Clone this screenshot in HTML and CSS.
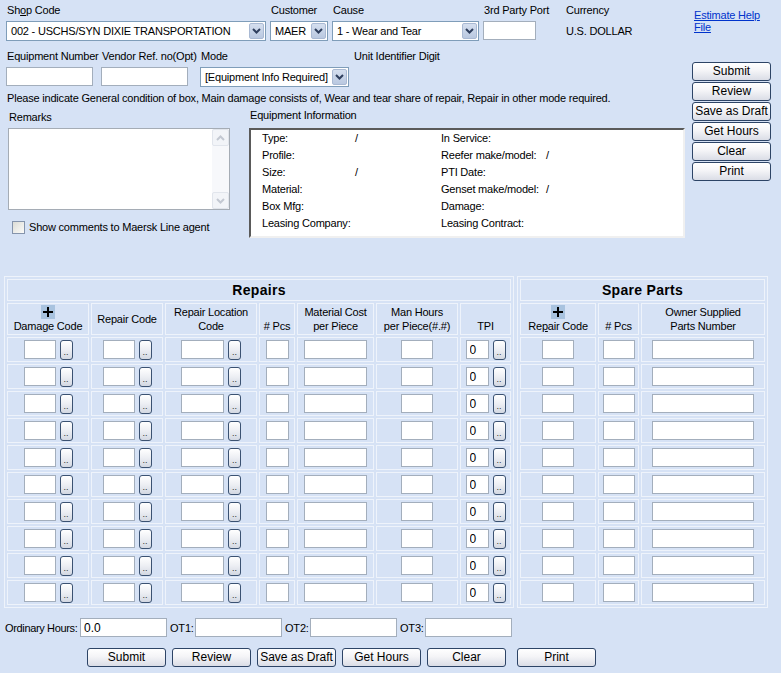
FILE: index.html
```html
<!DOCTYPE html>
<html>
<head>
<meta charset="utf-8">
<link rel="stylesheet" href="styles.css">
</head>
<body>
<div class="page">
  <div class="top">
    <div class="main">
      <div class="row r1">
        <div class="field w-shop">
          <label class="lbl">Sh<u>o</u>p Code</label>
          <div class="select"><span class="sel-text">002 - USCHS/SYN DIXIE TRANSPORTATION</span><span class="sel-arrow"><svg width="9" height="6" viewBox="0 0 9 6"><path d="M1 1L4.5 4.5L8 1" stroke="#2f3f5e" stroke-width="2" fill="none"/></svg></span></div>
        </div>
        <div class="field w-cust">
          <label class="lbl">Customer</label>
          <div class="select"><span class="sel-text">MAER</span><span class="sel-arrow"><svg width="9" height="6" viewBox="0 0 9 6"><path d="M1 1L4.5 4.5L8 1" stroke="#2f3f5e" stroke-width="2" fill="none"/></svg></span></div>
        </div>
        <div class="field w-cause">
          <label class="lbl">Cause</label>
          <div class="select"><span class="sel-text">1 - Wear and Tear</span><span class="sel-arrow"><svg width="9" height="6" viewBox="0 0 9 6"><path d="M1 1L4.5 4.5L8 1" stroke="#2f3f5e" stroke-width="2" fill="none"/></svg></span></div>
        </div>
        <div class="field w-port">
          <label class="lbl">3rd Party Port</label>
          <input class="inp full" type="text">
        </div>
        <div class="field w-cur">
          <label class="lbl">Currency</label>
          <div class="cur-val">U.S. DOLLAR</div>
        </div>
      </div>

      <div class="row r2">
        <div class="field w-eq">
          <label class="lbl">Equipment Number</label>
          <input class="inp full" type="text">
        </div>
        <div class="field w-vendor">
          <label class="lbl">Vendor Ref. no(Opt)</label>
          <input class="inp full" type="text">
        </div>
        <div class="field w-mode">
          <label class="lbl">Mode</label>
          <div class="select"><span class="sel-text">[Equipment Info Required]</span><span class="sel-arrow"><svg width="9" height="6" viewBox="0 0 9 6"><path d="M1 1L4.5 4.5L8 1" stroke="#2f3f5e" stroke-width="2" fill="none"/></svg></span></div>
        </div>
        <div class="field">
          <label class="lbl">Unit Identifier Digit</label>
        </div>
      </div>

      <p class="note">Please indicate General condition of box, Main damage consists of, Wear and tear share of repair, Repair in other mode required.</p>

      <div class="row r4">
        <div class="remarks">
          <label class="lbl lbl-rem">Remarks</label>
          <div class="ta-box">
            <textarea class="ta"></textarea>
            <div class="sb">
              <span class="sb-btn"><svg width="9" height="6" viewBox="0 0 9 6"><path d="M1 5L4.5 1.5L8 5" stroke="#c3c8d2" stroke-width="2" fill="none"/></svg></span>
              <span class="sb-track"></span>
              <span class="sb-btn"><svg width="9" height="6" viewBox="0 0 9 6"><path d="M1 1L4.5 4.5L8 1" stroke="#c3c8d2" stroke-width="2" fill="none"/></svg></span>
            </div>
          </div>
          <div class="chk-row"><span class="chk"></span><span>Show comments to Maersk Line agent</span></div>
        </div>
        <div class="equip">
          <label class="lbl lbl-eq">Equipment Information</label>
          <div class="eq-box">
            <div class="eq-grid">
              <span>Type:</span><span>/</span><span>In Service:</span><span></span>
              <span>Profile:</span><span></span><span>Reefer make/model:</span><span>/</span>
              <span>Size:</span><span>/</span><span>PTI Date:</span><span></span>
              <span>Material:</span><span></span><span>Genset make/model:</span><span>/</span>
              <span>Box Mfg:</span><span></span><span>Damage:</span><span></span>
              <span>Leasing Company:</span><span></span><span>Leasing Contract:</span><span></span>
            </div>
          </div>
        </div>
      </div>
    </div>

    <div class="side">
      <a class="help" href="#">Estimate Help<br>File</a>
      <div class="side-btns">
        <button class="btn">Submit</button>
        <button class="btn">Review</button>
        <button class="btn">Save as Draft</button>
        <button class="btn">Get Hours</button>
        <button class="btn">Clear</button>
        <button class="btn">Print</button>
      </div>
    </div>
  </div>

  <div class="tables">
    <table class="grid repairs">
      <colgroup><col class="c82"><col class="c72"><col class="c92"><col class="c36"><col class="c77"><col class="c82"><col class="c51"></colgroup>
      <tr><th class="title" colspan="7">Repairs</th></tr>
      <tr class="head">
        <th><span class="plus"><svg width="14" height="14" viewBox="0 0 14 14"><path d="M7 2V12M2 7H12" stroke="#000" stroke-width="2"/></svg></span>Damage Code</th>
        <th>Repair Code</th>
        <th>Repair Location<br>Code</th>
        <th class="bot"># Pcs</th>
        <th>Material Cost<br>per Piece</th>
        <th>Man Hours<br>per Piece(#.#)</th>
        <th class="bot">TPI</th>
      </tr>
      <tr><td><input class="inp w32"><button class="dots">..</button></td><td><input class="inp w32"><button class="dots">..</button></td><td><input class="inp w43"><button class="dots">..</button></td><td><input class="inp w23"></td><td><input class="inp w63"></td><td><input class="inp w32"></td><td><input class="inp w23" value="0"><button class="dots">..</button></td></tr>
      <tr><td><input class="inp w32"><button class="dots">..</button></td><td><input class="inp w32"><button class="dots">..</button></td><td><input class="inp w43"><button class="dots">..</button></td><td><input class="inp w23"></td><td><input class="inp w63"></td><td><input class="inp w32"></td><td><input class="inp w23" value="0"><button class="dots">..</button></td></tr>
      <tr><td><input class="inp w32"><button class="dots">..</button></td><td><input class="inp w32"><button class="dots">..</button></td><td><input class="inp w43"><button class="dots">..</button></td><td><input class="inp w23"></td><td><input class="inp w63"></td><td><input class="inp w32"></td><td><input class="inp w23" value="0"><button class="dots">..</button></td></tr>
      <tr><td><input class="inp w32"><button class="dots">..</button></td><td><input class="inp w32"><button class="dots">..</button></td><td><input class="inp w43"><button class="dots">..</button></td><td><input class="inp w23"></td><td><input class="inp w63"></td><td><input class="inp w32"></td><td><input class="inp w23" value="0"><button class="dots">..</button></td></tr>
      <tr><td><input class="inp w32"><button class="dots">..</button></td><td><input class="inp w32"><button class="dots">..</button></td><td><input class="inp w43"><button class="dots">..</button></td><td><input class="inp w23"></td><td><input class="inp w63"></td><td><input class="inp w32"></td><td><input class="inp w23" value="0"><button class="dots">..</button></td></tr>
      <tr><td><input class="inp w32"><button class="dots">..</button></td><td><input class="inp w32"><button class="dots">..</button></td><td><input class="inp w43"><button class="dots">..</button></td><td><input class="inp w23"></td><td><input class="inp w63"></td><td><input class="inp w32"></td><td><input class="inp w23" value="0"><button class="dots">..</button></td></tr>
      <tr><td><input class="inp w32"><button class="dots">..</button></td><td><input class="inp w32"><button class="dots">..</button></td><td><input class="inp w43"><button class="dots">..</button></td><td><input class="inp w23"></td><td><input class="inp w63"></td><td><input class="inp w32"></td><td><input class="inp w23" value="0"><button class="dots">..</button></td></tr>
      <tr><td><input class="inp w32"><button class="dots">..</button></td><td><input class="inp w32"><button class="dots">..</button></td><td><input class="inp w43"><button class="dots">..</button></td><td><input class="inp w23"></td><td><input class="inp w63"></td><td><input class="inp w32"></td><td><input class="inp w23" value="0"><button class="dots">..</button></td></tr>
      <tr><td><input class="inp w32"><button class="dots">..</button></td><td><input class="inp w32"><button class="dots">..</button></td><td><input class="inp w43"><button class="dots">..</button></td><td><input class="inp w23"></td><td><input class="inp w63"></td><td><input class="inp w32"></td><td><input class="inp w23" value="0"><button class="dots">..</button></td></tr>
      <tr><td><input class="inp w32"><button class="dots">..</button></td><td><input class="inp w32"><button class="dots">..</button></td><td><input class="inp w43"><button class="dots">..</button></td><td><input class="inp w23"></td><td><input class="inp w63"></td><td><input class="inp w32"></td><td><input class="inp w23" value="0"><button class="dots">..</button></td></tr>
    </table>

    <table class="grid spare">
      <colgroup><col class="c76"><col class="c41"><col class="c124"></colgroup>
      <tr><th class="title" colspan="3">Spare Parts</th></tr>
      <tr class="head">
        <th><span class="plus"><svg width="14" height="14" viewBox="0 0 14 14"><path d="M7 2V12M2 7H12" stroke="#000" stroke-width="2"/></svg></span>Re<u>p</u>air Code</th>
        <th class="bot"># Pcs</th>
        <th>Owner Supplied<br>Parts Number</th>
      </tr>
      <tr><td><input class="inp w32"></td><td><input class="inp w32"></td><td><input class="inp w102"></td></tr>
      <tr><td><input class="inp w32"></td><td><input class="inp w32"></td><td><input class="inp w102"></td></tr>
      <tr><td><input class="inp w32"></td><td><input class="inp w32"></td><td><input class="inp w102"></td></tr>
      <tr><td><input class="inp w32"></td><td><input class="inp w32"></td><td><input class="inp w102"></td></tr>
      <tr><td><input class="inp w32"></td><td><input class="inp w32"></td><td><input class="inp w102"></td></tr>
      <tr><td><input class="inp w32"></td><td><input class="inp w32"></td><td><input class="inp w102"></td></tr>
      <tr><td><input class="inp w32"></td><td><input class="inp w32"></td><td><input class="inp w102"></td></tr>
      <tr><td><input class="inp w32"></td><td><input class="inp w32"></td><td><input class="inp w102"></td></tr>
      <tr><td><input class="inp w32"></td><td><input class="inp w32"></td><td><input class="inp w102"></td></tr>
      <tr><td><input class="inp w32"></td><td><input class="inp w32"></td><td><input class="inp w102"></td></tr>
    </table>
  </div>

  <div class="hours">
    <span class="h-ord">Ordinary Hours:</span><input class="inp w87" value="0.0">
    <span class="h-ot">OT1:</span><input class="inp w87">
    <span class="h-ot">OT2:</span><input class="inp w87">
    <span class="h-ot">OT3:</span><input class="inp w87">
  </div>

  <div class="bottom-btns">
    <button class="btn">Submit</button>
    <button class="btn">Review</button>
    <button class="btn">Save as Draft</button>
    <button class="btn">Get Hours</button>
    <button class="btn">Clear</button>
    <button class="btn btn-print">Print</button>
  </div>
</div>
</body>
</html>
```

FILE: styles.css
```css
* { box-sizing: border-box; }

body {
  margin: 0;
  background: #d6e2f5;
  font-family: "Liberation Sans", Arial, sans-serif;
  font-size: 11px;
  letter-spacing: -0.2px;
  color: #000;
}

.page {
  width: 781px;
  height: 673px;
  overflow: hidden;
}

.top { display: flex; }

.main {
  width: 686px;
  padding-left: 6px;
  padding-top: 3px;
}

.side {
  width: 79px;
  margin-left: 6px;
  padding-top: 9px;
}

.row { display: flex; }

.field { display: flex; flex-direction: column; flex: none; }

.lbl {
  display: block;
  height: 14px;
  line-height: 14px;
  margin-bottom: 4px;
  white-space: nowrap;
  padding-left: 1px;
}

.r1 { gap: 4px; }
.w-shop { width: 260px; }
.w-cust { width: 58px; }
.w-cause { width: 147px; }
.w-port { width: 53px; }
.w-cur { margin-left: 25px; }
.cur-val { height: 20px; line-height: 20px; padding-left: 1px; }

.r2 { margin-top: 8px; }
.w-eq { width: 87px; }
.w-vendor { width: 87px; margin-left: 8px; }
.w-mode { width: 149px; margin-left: 12px; }
.r2 .field:last-child { margin-left: 4px; }

.select {
  display: flex;
  align-items: center;
  height: 20px;
  background: #fff;
  border: 1px solid #7f9db9;
  padding: 1px;
}
.sel-text {
  flex: 1;
  padding-left: 3px;
  white-space: nowrap;
  overflow: hidden;
}
.sel-arrow {
  flex: none;
  width: 15px;
  height: 16px;
  display: flex;
  align-items: center;
  justify-content: center;
  background: linear-gradient(#d5dfef, #b9c8e0);
  border: 1px solid #a9b9d3;
  border-radius: 2px;
}

.inp {
  height: 19px;
  border: 1px solid #a3aebc;
  background: #fff;
  font: inherit;
  font-size: 12px;
  padding: 0 3px;
  margin: 0;
  vertical-align: middle;
  outline: none;
}
.full { width: 100%; }
.w23 { width: 23px; }
.w32 { width: 32px; }
.w43 { width: 43px; }
.w63 { width: 63px; }
.w87 { width: 87px; }
.w102 { width: 102px; }

.note {
  margin: 4px 0 0 1px;
  line-height: 14px;
  white-space: nowrap;
}

.r4 { margin-top: 5px; }

.remarks { width: 222px; margin-left: 2px; }
.lbl-rem { margin-bottom: 4px; }
.lbl-eq { margin-top: -2px; margin-bottom: 6px; }

.ta-box {
  display: flex;
  width: 222px;
  height: 82px;
  border: 1px solid #a5acb5;
  background: #fff;
}
.ta {
  flex: 1;
  border: 0;
  resize: none;
  outline: none;
  font: inherit;
  margin: 0;
  padding: 2px;
}
.sb {
  width: 17px;
  display: flex;
  flex-direction: column;
  background: #f7f8fb;
}
.sb-btn {
  width: 17px;
  height: 17px;
  display: flex;
  align-items: center;
  justify-content: center;
  background: #f2f4f8;
  border: 1px solid #e1e5ec;
  border-radius: 2px;
}
.sb-track { flex: 1; }

.chk-row {
  display: flex;
  align-items: center;
  gap: 4px;
  margin-top: 10px;
  margin-left: 4px;
  height: 14px;
}
.chk {
  width: 13px;
  height: 13px;
  border: 1px solid #8594ac;
  background: linear-gradient(135deg, #dcdcd6, #fbfbf9);
}

.equip { margin-left: 19px; }
.eq-box {
  width: 436px;
  height: 110px;
  background: #fff;
  border-style: solid;
  border-width: 2px;
  border-color: #5a5a5a #f0f0f0 #f0f0f0 #5a5a5a;
  padding: 0 0 0 11px;
}
.eq-grid {
  display: grid;
  grid-template-columns: 93px 86px 105px 1fr;
  grid-auto-rows: 17px;
  line-height: 17px;
  white-space: nowrap;
}

.help {
  display: block;
  color: #0033cc;
  line-height: 12px;
  padding-left: 2px;
}
.side-btns {
  margin-top: 29px;
  display: flex;
  flex-direction: column;
  gap: 1px;
}

.btn {
  width: 79px;
  height: 19px;
  padding: 0;
  border: 1px solid #2d4466;
  border-radius: 3px;
  background: linear-gradient(#ffffff, #f4f4f7 45%, #dadde6);
  font: inherit;
  font-size: 12px;
  color: #000;
  line-height: 17px;
}

.tables {
  display: flex;
  gap: 3px;
  margin-top: 38px;
  padding-left: 4px;
}

.grid {
  border-collapse: separate;
  border-spacing: 2px;
  border: 1px solid #eef3fb;
  table-layout: fixed;
}
.repairs { width: 510px; }
.spare { width: 251px; }
.c82 { width: 82px; }
.c72 { width: 72px; }
.c92 { width: 92px; }
.c36 { width: 36px; }
.c77 { width: 77px; }
.c51 { width: 51px; }
.c76 { width: 76px; }
.c41 { width: 41px; }
.c124 { width: 124px; }

.grid th, .grid td {
  border: 1px solid #eef3fb;
  padding: 0;
  text-align: center;
  white-space: nowrap;
}
.grid th { font-weight: normal; line-height: 14px; }
.grid th.title {
  height: 22px;
  font-weight: bold;
  font-size: 14px;
  letter-spacing: 0.3px;
  line-height: 18px;
}
.head th { height: 32px; vertical-align: middle; }
.head th.bot { vertical-align: bottom; padding-bottom: 1px; }
.plus {
  display: block;
  width: 14px;
  height: 14px;
  margin: 0 auto;
  background: #a9c3df;
}
.plus svg { display: block; }
.grid td { height: 25px; vertical-align: middle; }

.dots {
  width: 13px;
  height: 20px;
  margin: 0 0 0 4px;
  padding: 0;
  vertical-align: middle;
  border: 1px solid #3b5272;
  border-radius: 3px;
  background: linear-gradient(#ffffff, #eceef3 50%, #d3d8e2);
  font: inherit;
  font-size: 9px;
  letter-spacing: 0;
  line-height: 22px;
  color: #333;
}

.hours {
  display: flex;
  align-items: center;
  margin-top: 10px;
  padding-left: 5px;
}
.h-ord { width: 75px; white-space: nowrap; letter-spacing: -0.35px; }
.h-ot { width: 28px; padding-left: 3px; white-space: nowrap; }

.bottom-btns {
  display: flex;
  gap: 6px;
  margin-top: 11px;
  padding-left: 87px;
}
.btn-print { margin-left: 5px; }
```
